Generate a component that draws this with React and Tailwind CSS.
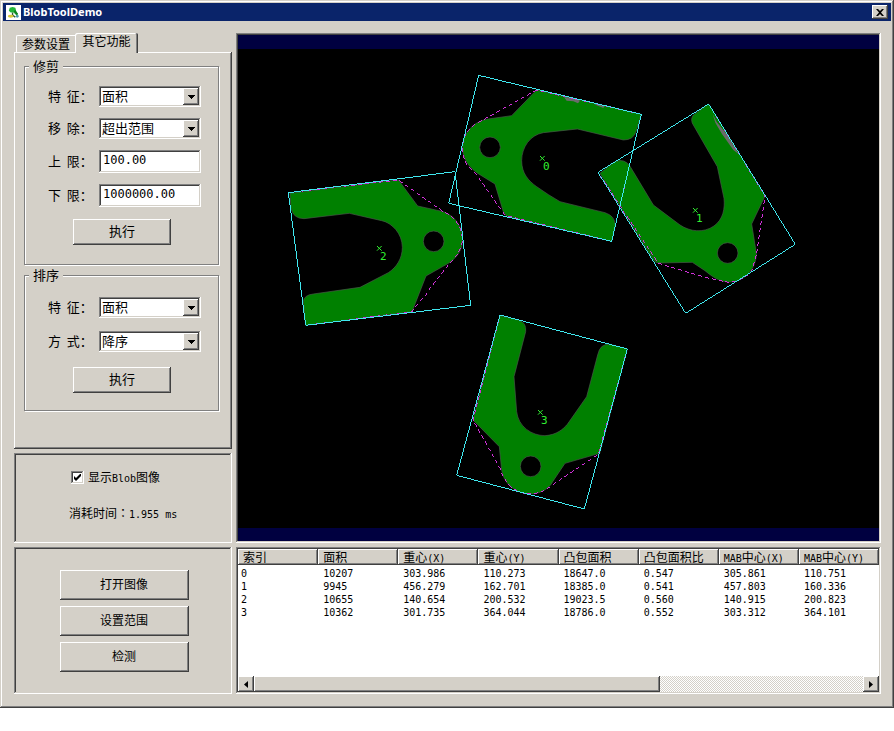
import { useState } from "react";

const RAISED =
  "bg-[#d4d0c8] shadow-[inset_-1px_-1px_#404040,inset_1px_1px_#fff,inset_-2px_-2px_#808080]";
const SUNKEN =
  "shadow-[inset_-1px_-1px_#fff,inset_1px_1px_#808080,inset_-2px_-2px_#d4d0c8,inset_2px_2px_#404040]";
const MONO = "font-['DejaVu_Sans_Mono','Noto_Sans_CJK_SC',monospace]";

const COLUMNS = [
  { name: "索引" },
  { name: "面积" },
  { name: "重心", suffix: "(X)" },
  { name: "重心", suffix: "(Y)" },
  { name: "凸包面积" },
  { name: "凸包面积比" },
  { prefix: "MAB", name: "中心", suffix: "(X)" },
  { prefix: "MAB", name: "中心", suffix: "(Y)" },
];

const ROWS = [
  ["0", "10207", "303.986", "110.273", "18647.0", "0.547", "305.861", "110.751"],
  ["1", "9945", "456.279", "162.701", "18385.0", "0.541", "457.803", "160.336"],
  ["2", "10655", "140.654", "200.532", "19023.5", "0.560", "140.915", "200.823"],
  ["3", "10362", "301.735", "364.044", "18786.0", "0.552", "303.312", "364.101"],
];

// Blob outlines, three units per image pixel, relative to each origin
const BLOBS = [
  {
    id: 0,
    origin: "translate(202 11) scale(0.33333)",
    body: "M290 90L604 163L588 215Q580 240 550 240L412 207L310 218C270 225 245 262 245 302C245 340 265 362 290 380Q325 405 360 425L495 458Q525 468 526 495L515 544L200 468L190 455L165 372L110 338C80 315 68 290 68 262C68 225 95 185 145 177L215 167Z",
    hole: [150, 262],
    box: "116,46 604,163 515,544 26,430",
    hull: "M290 90L125 182Q68 210 68 262T103 335L195 466L515 544L604 163Z",
    scuff: "M372 112L396 112L420 122L414 130L400 124L380 122ZM460 130L494 138L490 144L470 136Z",
    center: [307, 295],
  },
  {
    id: 1,
    origin: "translate(352 41) scale(0.33333)",
    body: "M356 42L525 318L485 402L499 490C499 530 470 576 415 576C385 574 365 558 345 542L307 517L205 519Q198 519 190 510L30 250L75 215Q105 203 122 232L190 345L270 405C300 425 340 430 372 408C400 388 405 355 402 325L382 230L310 105Q300 90 310 75Z",
    hole: [413, 489],
    box: "356,42 616,463 287,670 24,247",
    hull: "M356 42L525 318L500 490L485 545Q450 577 415 577L345 562L205 520L24 247Z",
    scuff: "M368 72L380 96L412 134L446 192L430 180L396 132L376 98Z",
    center: [316, 361],
  },
  {
    id: 2,
    origin: "translate(42 111) scale(0.33333)",
    body: "M30 100L350 60L357 62L413 138L490 155C530 170 548 205 547 240C547 270 532 292 505 310L438 348L396 455L77 496L70 425Q72 405 100 402L240 382L325 338C350 322 367 295 367 262C367 220 335 188 305 182L208 160L72 176Q40 176 33 145Z",
    hole: [461, 244],
    box: "25,98 525,35 572,436 77,496",
    hull: "M25 98L355 60L490 155Q545 180 547 240Q545 275 510 308L396 455L77 496Z",
    center: [298, 265],
  },
  {
    id: 3,
    origin: "translate(212 256) scale(0.33333)",
    body: "M150 32L205 45Q230 52 227 80L192 215L200 320C205 365 245 392 285 392C320 390 340 372 352 358L410 275L443 150Q450 115 480 118L532 132L449 445L345 475L308 530C295 555 265 567 240 567C190 565 160 530 155 495L148 425L69 345Z",
    hole: [242, 484],
    box: "150,30 532,132 403,612 20,511",
    hull: "M150 30L69 345L150 490Q175 565 240 567Q275 565 300 545L445 448L532 132Z",
    center: [271, 322],
  },
];

function AppIcon() {
  return (
    <svg className="h-[15px] w-[15px] bg-white" viewBox="0 0 16 16" aria-hidden="true">
      <path d="M4 3l3-1 3 1 1 4 2 3-2 1-3-3H5L3 6z" fill="#22b838" />
      <path d="M9 6l3 4" stroke="#108020" strokeWidth="2" />
      <path d="M7 8v3l3 2" stroke="#306030" strokeWidth="1.5" fill="none" />
      <ellipse cx="5" cy="12" rx="3" ry="1.5" fill="#d8c838" />
      <circle cx="12" cy="12" r="1.5" fill="#4a9aaa" />
    </svg>
  );
}

function ImageView({ showBlobs }) {
  return (
    <div className={`bg-[#000040] px-0.5 pt-4 pb-[15px] ${SUNKEN}`}>
      <svg className="block w-full bg-black" viewBox="0 0 641 479" role="img" aria-label="Blob">
        {showBlobs &&
          BLOBS.map((blob) => (
            <g key={blob.id} transform={blob.origin}>
              <path d={blob.body} fill="#008000" stroke="#4a5a4a" strokeWidth="2" />
              <circle cx={blob.hole[0]} cy={blob.hole[1]} r="31" fill="#000" stroke="#4a5a4a" strokeWidth="2" />
              {blob.scuff && <path d={blob.scuff} fill="#6a6a6a" />}
            </g>
          ))}
        {BLOBS.map((blob) => {
          const [x, y] = blob.center;
          return (
            <g key={blob.id} transform={blob.origin} fill="none">
              <path d={blob.hull} stroke="#d030d8" strokeWidth="3" strokeDasharray="12 9" shapeRendering="crispEdges" />
              <polygon points={blob.box} stroke="#40e8f0" strokeWidth="3" shapeRendering="crispEdges" />
              <path d={`M${x - 7} ${y - 7}l14 14m0-14l-14 14`} stroke="#30f030" strokeWidth="3" />
              <text x={x + 2} y={y + 35} fill="#30f030" className="font-['DejaVu_Sans_Mono',monospace] text-[33px]">
                {blob.id}
              </text>
            </g>
          );
        })}
      </svg>
    </div>
  );
}

function SelectRow({ id, label, options }) {
  return (
    <div className="flex items-center">
      <label htmlFor={id} className="w-[51px] pb-0.5 leading-4 whitespace-pre">
        {label}
      </label>
      <div className={`relative h-[21px] w-[102px] bg-white ${SUNKEN}`}>
        <select
          id={id}
          className="block h-full w-full appearance-none bg-transparent pr-5 pb-0.5 pl-[3px] leading-4 outline-none"
        >
          {options.map((option) => (
            <option key={option}>{option}</option>
          ))}
        </select>
        <span
          className={`pointer-events-none absolute top-0.5 right-0.5 bottom-0.5 flex w-4 items-center justify-center ${RAISED}`}
        >
          <svg className="h-1 w-[7px]" viewBox="0 0 7 4" shapeRendering="crispEdges" aria-hidden="true">
            <path d="M0 0h7L3.5 4z" />
          </svg>
        </span>
      </div>
    </div>
  );
}

function InputRow({ id, label, value }) {
  return (
    <div className="flex items-center">
      <label htmlFor={id} className="w-[51px] pb-0.5 leading-4 whitespace-pre">
        {label}
      </label>
      <input
        id={id}
        defaultValue={value}
        className={`h-[23px] w-[102px] bg-white px-1 pb-1 text-xs outline-none ${MONO} ${SUNKEN}`}
      />
    </div>
  );
}

function Group({ title, children }) {
  return (
    <fieldset className="border border-[#808080] pl-[23px] shadow-[inset_1px_1px_#fff,1px_1px_#fff]">
      <legend className="-ml-[19px] bg-[#d4d0c8] px-1 leading-4">{title}</legend>
      {children}
    </fieldset>
  );
}

function SidePanel({ showBlobs, onToggle }) {
  return (
    <div className="flex flex-col gap-1">
      <div className="flex flex-1 flex-col">
        <div role="tablist" className="flex h-[19px] items-end pl-0.5 text-xs">
          <button
            type="button"
            role="tab"
            aria-selected="false"
            className="h-[17px] w-[59px] rounded-tl-xs border-t border-l border-white leading-4"
          >
            参数设置
          </button>
          <button
            type="button"
            role="tab"
            aria-selected="true"
            className="relative -mb-px h-5 w-[63px] rounded-t-xs bg-[#d4d0c8] pb-1 leading-4 shadow-[inset_-1px_0_#404040,inset_1px_1px_#fff,inset_-2px_0_#808080]"
          >
            其它功能
          </button>
        </div>
        <div
          role="tabpanel"
          className={`flex flex-1 flex-col gap-0.5 pt-1.5 pr-[13px] pb-9 pl-[10px] text-[13px] ${RAISED}`}
        >
          <Group title="修剪">
            <div className="flex flex-col gap-[11px] pt-3">
              <SelectRow id="trim-feature" label="特  征：" options={["面积"]} />
              <SelectRow id="trim-remove" label="移  除：" options={["超出范围"]} />
              <InputRow id="trim-upper" label="上  限：" value="100.00" />
              <InputRow id="trim-lower" label="下  限：" value="1000000.00" />
            </div>
            <button type="button" className={`mt-3 mb-[19px] ml-[25px] block h-[26px] w-[98px] pb-0.5 ${RAISED}`}>
              执行
            </button>
          </Group>
          <Group title="排序">
            <div className="flex flex-col gap-[13px] pt-[14px]">
              <SelectRow id="sort-feature" label="特  征：" options={["面积"]} />
              <SelectRow id="sort-order" label="方  式：" options={["降序", "升序"]} />
            </div>
            <button type="button" className={`mt-[15px] mb-[17px] ml-[25px] block h-[26px] w-[98px] pb-0.5 ${RAISED}`}>
              执行
            </button>
          </Group>
        </div>
      </div>

      <div className={`flex h-[90px] flex-col items-start gap-5 pt-4 pl-[55px] text-xs ${SUNKEN}`}>
        <label className="ml-0.5 flex items-center gap-1">
          <span className="relative flex">
            <input
              type="checkbox"
              checked={showBlobs}
              onChange={(event) => onToggle(event.target.checked)}
              className={`h-[13px] w-[13px] appearance-none bg-white ${SUNKEN}`}
            />
            {showBlobs && (
              <svg className="pointer-events-none absolute top-[3px] left-[3px] h-[7px] w-[7px]" viewBox="0 0 7 7">
                <path d="M0 2v3l2 2 5-5V-1L2 4z" />
              </svg>
            )}
          </span>
          <span>
            显示<span className={`text-[10px] ${MONO}`}>Blob</span>图像
          </span>
        </label>
        <p>
          消耗时间<span className="font-['Noto_Sans_CJK_TC',sans-serif]">：</span>
          <span className={`text-[10px] ${MONO}`}>1.955 ms</span>
        </p>
      </div>
    </div>
  );
}

function ResultTable() {
  return (
    <div className={`flex min-w-0 flex-col bg-white p-0.5 ${SUNKEN}`}>
      <div className="flex-1 overflow-x-clip">
        <table className="w-full table-fixed border-separate border-spacing-0 text-left text-xs">
          <thead>
            <tr>
              {COLUMNS.map((column, index) => (
                <th
                  key={index}
                  scope="col"
                  className={`h-4 p-0 pl-[5px] leading-4 font-normal whitespace-nowrap ${RAISED}`}
                >
                  {column.prefix && <span className={`text-[10px] leading-none ${MONO}`}>{column.prefix}</span>}
                  {column.name}
                  {column.suffix && <span className={`text-[10px] leading-none ${MONO}`}>{column.suffix}</span>}
                </th>
              ))}
            </tr>
          </thead>
          <tbody className={`text-[10px] leading-[13px] ${MONO}`}>
            {ROWS.map((row) => (
              <tr key={row[0]} className="first:*:pt-0.5">
                {row.map((cell, index) => (
                  <td key={index} className="p-0 pl-[5px] first:pl-[3px]">
                    {cell}
                  </td>
                ))}
              </tr>
            ))}
          </tbody>
        </table>
      </div>
      <div className="flex h-4 bg-[repeating-conic-gradient(#fff_0_25%,#d4d0c8_0_50%)] bg-size-[2px_2px]">
        <button type="button" aria-label="向左" className={`flex w-4 items-center justify-center ${RAISED}`}>
          <svg className="h-[7px] w-1" viewBox="0 0 4 7">
            <path d="M4 0v7L0 3.5z" />
          </svg>
        </button>
        <div className="flex-1">
          <div className={`h-full w-2/3 ${RAISED}`} />
        </div>
        <button type="button" aria-label="向右" className={`flex w-4 items-center justify-center ${RAISED}`}>
          <svg className="h-[7px] w-1" viewBox="0 0 4 7">
            <path d="M0 0v7l4-3.5z" />
          </svg>
        </button>
      </div>
    </div>
  );
}

export default function App() {
  const [showBlobs, setShowBlobs] = useState(true);

  return (
    <div className="min-h-screen bg-white font-['Noto_Sans_CJK_SC',sans-serif] text-black">
      <div className="bg-[#d4d0c8] p-[3px] shadow-[inset_-1px_-1px_#404040,inset_1px_1px_#d4d0c8,inset_-2px_-2px_#808080,inset_2px_2px_#fff]">
        <header className="flex h-[18px] items-center bg-[#0a246a] px-[3px]">
          <AppIcon />
          <h1 className="ml-0.5 flex-1 font-['Noto_Sans',sans-serif] text-[11px] font-bold text-white">
            BlobToolDemo
          </h1>
          <button type="button" aria-label="关闭" className={`flex h-[14px] w-4 items-center justify-center ${RAISED}`}>
            <svg className="h-[7px] w-2" viewBox="0 0 8 7">
              <path d="M0 0h2l2 2 2-2h2L5 3.5 8 7H6L4 5 2 7H0l3-3.5z" />
            </svg>
          </button>
        </header>

        <main className="grid grid-cols-[218px_minmax(0,1fr)] gap-1 pt-3 pr-[10px] pb-[11px] pl-[11px]">
          <SidePanel showBlobs={showBlobs} onToggle={setShowBlobs} />
          <ImageView showBlobs={showBlobs} />
          <div className={`flex h-[147px] flex-col items-center gap-1.5 pt-[23px] pl-0.5 text-xs ${SUNKEN}`}>
            <button type="button" className={`h-[30px] w-[129px] pb-0.5 ${RAISED}`}>打开图像</button>
            <button type="button" className={`h-[30px] w-[129px] pb-0.5 ${RAISED}`}>设置范围</button>
            <button type="button" className={`h-[30px] w-[129px] pb-0.5 ${RAISED}`}>检测</button>
          </div>
          <ResultTable />
        </main>
      </div>
    </div>
  );
}
